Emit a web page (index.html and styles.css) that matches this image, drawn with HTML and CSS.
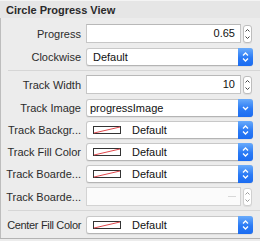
FILE: index.html
```html
<!DOCTYPE html>
<html lang="en">
<head>
  <meta charset="UTF-8">
  <title>Circle Progress View</title>
  <link rel="stylesheet" href="styles.css">
</head>
<body>

<div class="inspector">
  <div class="inspector-title">Circle Progress View</div>

  <div class="inspector-body">
    <div class="group">
      <div class="row row-field">
        <div class="row-label">Progress</div>
        <div class="stepper-field">
          <div class="field">0.65</div>
          <div class="stepper">
            <svg width="9" height="18" viewBox="0 0 9 18"><path d="M2.5 6.5L4.5 4.5L6.5 6.5M2.5 11.5L4.5 13.5L6.5 11.5" fill="none" stroke="#444" stroke-width="1"/></svg>
          </div>
        </div>
      </div>
      <div class="row">
        <div class="row-label">Clockwise</div>
        <div class="popup">
          <span class="popup-text">Default</span>
          <span class="popup-arrow">
            <svg width="15" height="18" viewBox="0 0 15 18"><path d="M5 7.5L7.5 5L10 7.5M5 10.5L7.5 13L10 10.5" fill="none" stroke="#fff" stroke-width="1.3"/></svg>
          </span>
        </div>
      </div>
    </div>

    <div class="divider"></div>

    <div class="group">
      <div class="row row-field">
        <div class="row-label">Track Width</div>
        <div class="stepper-field">
          <div class="field">10</div>
          <div class="stepper">
            <svg width="9" height="18" viewBox="0 0 9 18"><path d="M2.5 6.5L4.5 4.5L6.5 6.5M2.5 11.5L4.5 13.5L6.5 11.5" fill="none" stroke="#444" stroke-width="1"/></svg>
          </div>
        </div>
      </div>
      <div class="row">
        <div class="row-label">Track Image</div>
        <div class="popup combo">
          <span class="popup-text">progressImage</span>
          <span class="popup-arrow">
            <svg width="15" height="18" viewBox="0 0 15 18"><path d="M5 8L7.5 10.5L10 8" fill="none" stroke="#fff" stroke-width="1.3"/></svg>
          </span>
        </div>
      </div>
      <div class="row">
        <div class="row-label">Track Backgr...</div>
        <div class="popup color">
          <span class="swatch"><svg width="28" height="8" viewBox="0 0 28 8"><rect x="0.5" y="0.5" width="27" height="7" fill="#fff" stroke="#333"/><path d="M1 7L27 1" stroke="#e0494d" stroke-width="1"/></svg></span>
          <span class="popup-text">Default</span>
          <span class="popup-arrow">
            <svg width="15" height="18" viewBox="0 0 15 18"><path d="M5 7.5L7.5 5L10 7.5M5 10.5L7.5 13L10 10.5" fill="none" stroke="#fff" stroke-width="1.3"/></svg>
          </span>
        </div>
      </div>
      <div class="row">
        <div class="row-label">Track Fill Color</div>
        <div class="popup color">
          <span class="swatch"><svg width="28" height="8" viewBox="0 0 28 8"><rect x="0.5" y="0.5" width="27" height="7" fill="#fff" stroke="#333"/><path d="M1 7L27 1" stroke="#e0494d" stroke-width="1"/></svg></span>
          <span class="popup-text">Default</span>
          <span class="popup-arrow">
            <svg width="15" height="18" viewBox="0 0 15 18"><path d="M5 7.5L7.5 5L10 7.5M5 10.5L7.5 13L10 10.5" fill="none" stroke="#fff" stroke-width="1.3"/></svg>
          </span>
        </div>
      </div>
      <div class="row">
        <div class="row-label">Track Boarde...</div>
        <div class="popup color">
          <span class="swatch"><svg width="28" height="8" viewBox="0 0 28 8"><rect x="0.5" y="0.5" width="27" height="7" fill="#fff" stroke="#333"/><path d="M1 7L27 1" stroke="#e0494d" stroke-width="1"/></svg></span>
          <span class="popup-text">Default</span>
          <span class="popup-arrow">
            <svg width="15" height="18" viewBox="0 0 15 18"><path d="M5 7.5L7.5 5L10 7.5M5 10.5L7.5 13L10 10.5" fill="none" stroke="#fff" stroke-width="1.3"/></svg>
          </span>
        </div>
      </div>
      <div class="row row-field">
        <div class="row-label">Track Boarde...</div>
        <div class="stepper-field disabled">
          <div class="field"><span class="placeholder-dash"></span></div>
          <div class="stepper">
            <svg width="9" height="18" viewBox="0 0 9 18"><path d="M2.5 6.5L4.5 4.5L6.5 6.5M2.5 11.5L4.5 13.5L6.5 11.5" fill="none" stroke="#999" stroke-width="1"/></svg>
          </div>
        </div>
      </div>
    </div>

    <div class="divider"></div>

    <div class="group group-last">
      <div class="row">
        <div class="row-label tight">Center Fill Color</div>
        <div class="popup color">
          <span class="swatch"><svg width="28" height="8" viewBox="0 0 28 8"><rect x="0.5" y="0.5" width="27" height="7" fill="#fff" stroke="#333"/><path d="M1 7L27 1" stroke="#e0494d" stroke-width="1"/></svg></span>
          <span class="popup-text">Default</span>
          <span class="popup-arrow">
            <svg width="15" height="18" viewBox="0 0 15 18"><path d="M5 7.5L7.5 5L10 7.5M5 10.5L7.5 13L10 10.5" fill="none" stroke="#fff" stroke-width="1.3"/></svg>
          </span>
        </div>
      </div>
    </div>
  </div>
</div>

</body>
</html>
```

FILE: styles.css
```css
body {
  margin: 0;
  font-family: "Liberation Sans", Arial, sans-serif;
  font-size: 11px;
  color: #222;
  background: #ececec;
}

.inspector {
  width: 260px;
  border-bottom: 1px solid #b3b3b3;
}

.inspector-title {
  height: 18px;
  line-height: 18px;
  padding-left: 6px;
  font-weight: bold;
  color: #2a2a2a;
  background: #e6e6e6;
  border-top: 1px solid #f4f4f4;
  box-sizing: border-box;
}

.inspector-body {
  border-left: 1px solid #bdbdbd;
}

.group {
  display: flex;
  flex-direction: column;
  gap: 4px;
  padding: 6px 7px 4px 0;
}

.divider + .group {
  padding-top: 4px;
}

.divider + .group-last {
  padding-top: 5px;
}

.divider {
  margin-left: 7px;
  border-top: 1px solid #d6d6d6;
}

.row {
  display: grid;
  grid-template-columns: 80px 1fr;
  column-gap: 5px;
  align-items: center;
  height: 18px;
}

.row-field {
  height: 19px;
}

.row-field + .row {
  margin-top: 1px;
}

.row-label {
  text-align: right;
  white-space: nowrap;
  color: #2b2b2b;
}

.row-label.tight {
  letter-spacing: -0.33px;
}

.stepper-field {
  display: flex;
  align-items: center;
  gap: 2px;
  height: 19px;
}

.field {
  flex: 1;
  height: 19px;
  box-sizing: border-box;
  background: #fff;
  border: 1px solid #c6c6c6;
  border-top-color: #b8b8b8;
  text-align: right;
  line-height: 17px;
  padding-right: 5px;
  color: #111;
  position: relative;
}

.stepper {
  width: 9px;
  height: 18px;
  margin-right: 1px;
  box-sizing: border-box;
  background: #fff;
  border: 1px solid #bdbdbd;
  border-radius: 3px;
  box-shadow: 0 1px 0 rgba(0, 0, 0, 0.06);
  display: flex;
  align-items: center;
  justify-content: center;
  overflow: hidden;
}

.stepper svg {
  flex: none;
}

.disabled .field {
  background: #fbfbfb;
  border-color: #d3d3d3;
}

.disabled .stepper {
  border-color: #d0d0d0;
}

.placeholder-dash {
  position: absolute;
  right: 4px;
  top: 8px;
  width: 8px;
  border-top: 1px solid #d8d8d8;
}

.popup {
  display: flex;
  align-items: center;
  height: 18px;
  box-sizing: border-box;
  background: #fff;
  border: 1px solid #c8c8c8;
  border-bottom-color: #b4b4b4;
  border-radius: 3px;
  box-shadow: 0 1px 0 rgba(0, 0, 0, 0.05);
  color: #111;
}

.popup-text {
  flex: 1;
  padding-left: 6px;
  white-space: nowrap;
}

.combo .popup-text {
  padding-left: 3px;
}

.popup-arrow {
  width: 15px;
  height: 18px;
  margin: -1px -1px -1px 0;
  border-radius: 0 3px 3px 0;
  background: linear-gradient(to bottom, #69abfb, #2a7af5 55%, #1b6cf1);
  display: flex;
  align-items: center;
  justify-content: center;
}

.swatch {
  display: flex;
  margin-left: 6px;
  margin-right: 4px;
}

.color .popup-text {
  padding-left: 7px;
}
```
